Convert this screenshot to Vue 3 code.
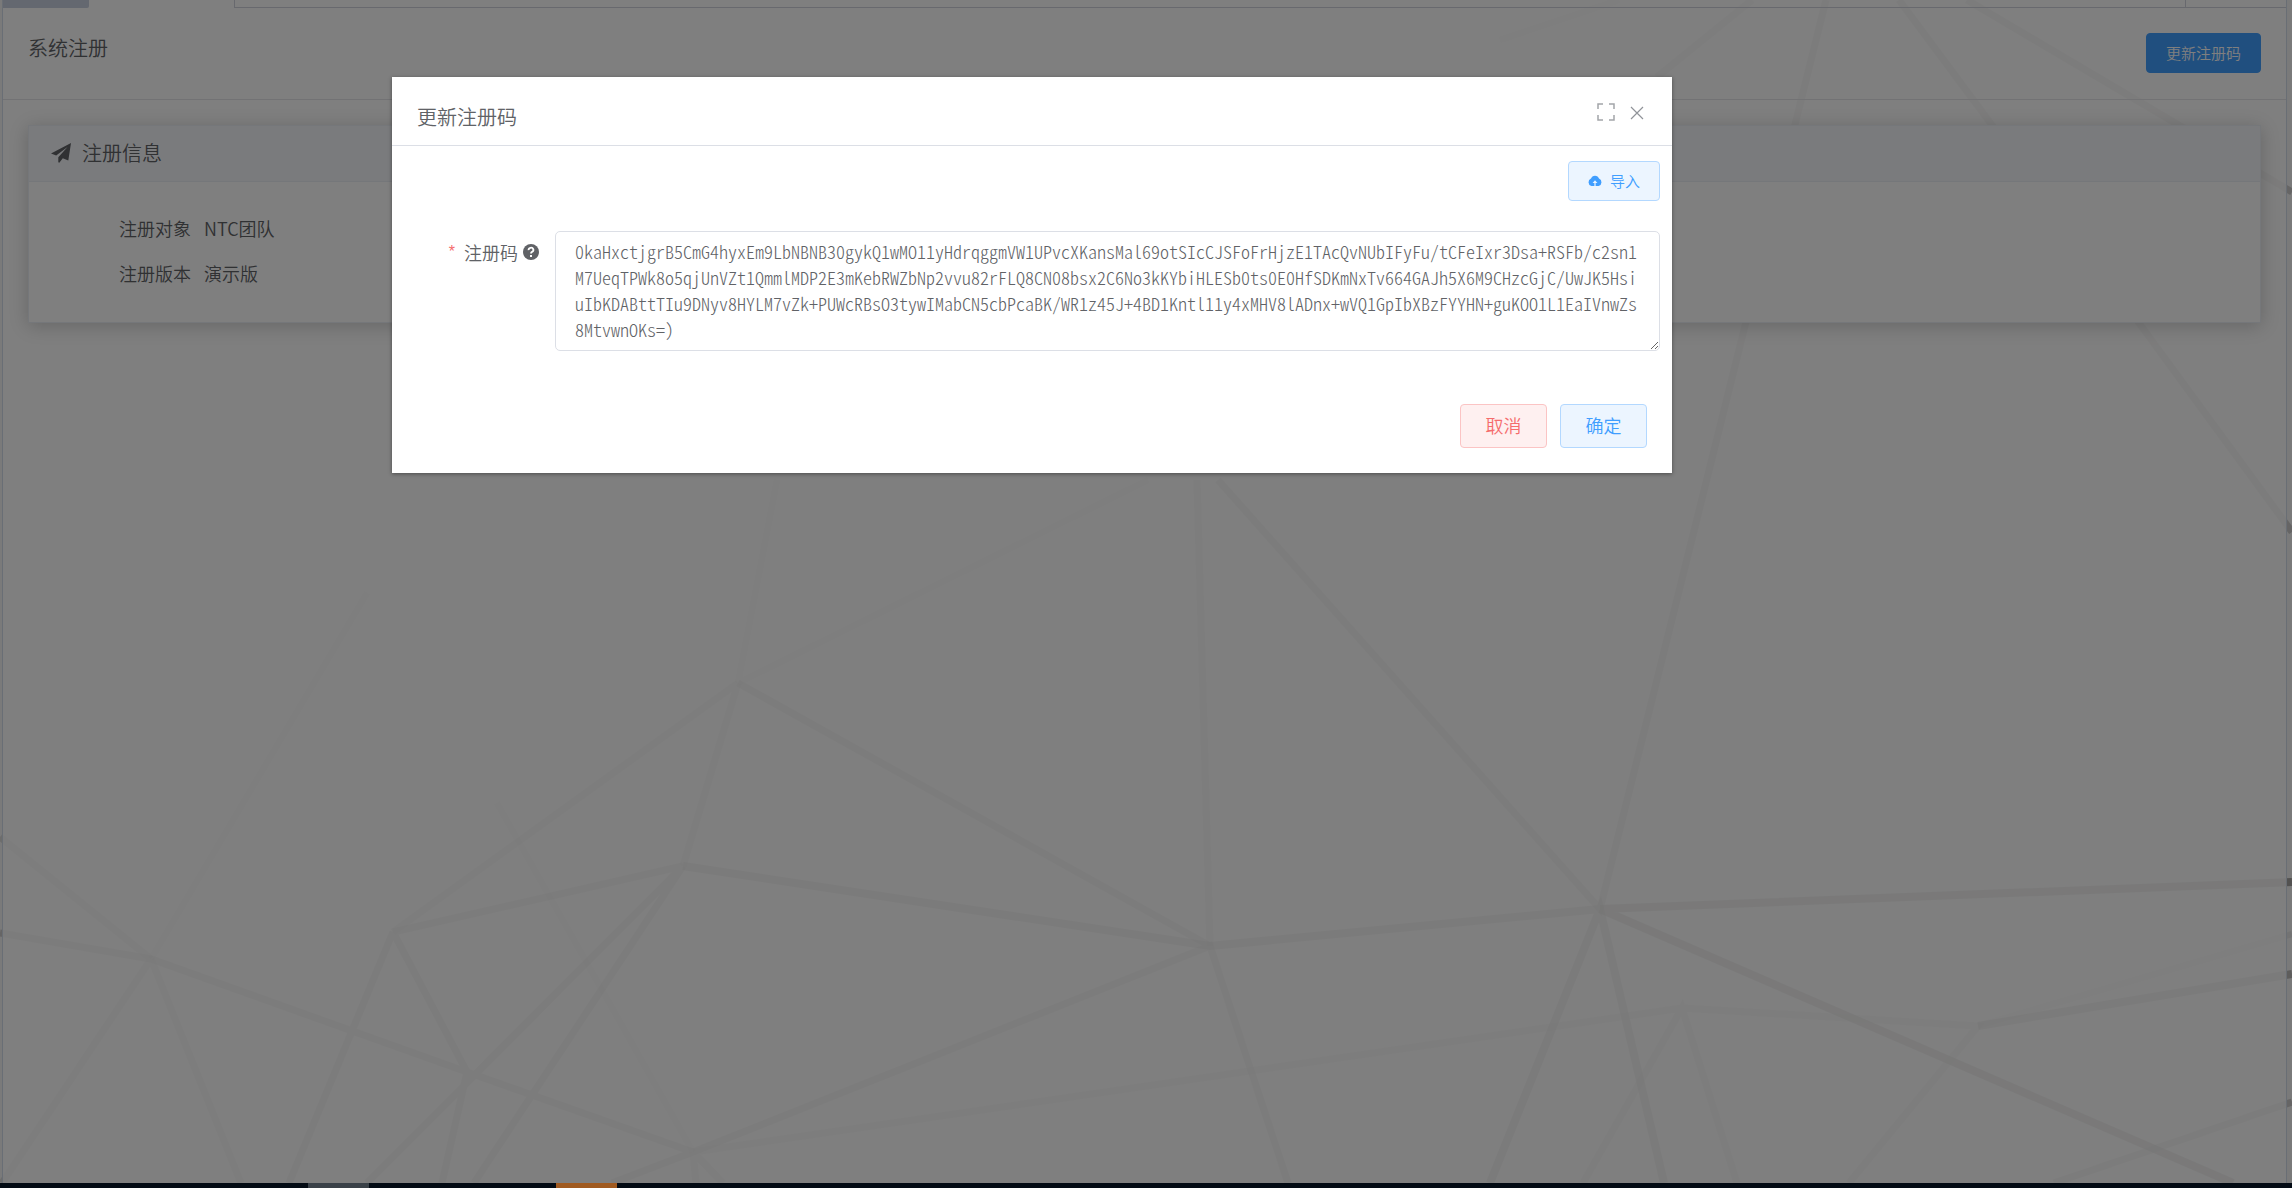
<script setup>
import { ref } from 'vue'

const code = ref(
  '0kaHxctjgrB5CmG4hyxEm9LbNBNB30gykQ1wMO11yHdrqggmVW1UPvcXKansMal69otSIcCJSFoFrHjzE1TAcQvNUbIFyFu/tCFeIxr3Dsa+RSFb/c2sn1' +
  'M7UeqTPWk8o5qjUnVZt1QmmlMDP2E3mKebRWZbNp2vvu82rFLQ8CN08bsx2C6No3kKYbiHLESb0ts0E0HfSDKmNxTv664GAJh5X6M9CHzcGjC/UwJK5Hsi' +
  'uIbKDABttTIu9DNyv8HYLM7vZk+PUWcRBsO3tywIMabCN5cbPcaBK/WR1z45J+4BD1Kntl11y4xMHV8lADnx+wVQ1GpIbXBzFYYHN+guKOO1L1EaIVnwZs' +
  '8MtvwnOKs=)'
)

const info = [
  { label: '注册对象', value: 'NTC团队' },
  { label: '注册版本', value: '演示版' }
]

// Polygon-mesh wallpaper, grouped by how strongly each set of edges shows
const mesh = [
  { opacity: 0.08, width: 6, d: 'M738 683L777 480M738 683L1148 480M151 959L367 593M693 1152L497 803M1500 40L1619 0M1978 1026L2292 934' },
  { opacity: 0.16, width: 7, d: 'M738 683L393 932M738 683L683 866M151 959L0 837M151 959L2 1183M151 959L241 1183M693 1152L1682 1008L1978 1026L1849 1183M1583 1183L1682 1008L1737 1183M693 1152L696 1183M693 1152L723 1183M1197 480L1210 946M1657 77L1752 0' },
  { opacity: 0.26, width: 7, d: 'M738 683L1210 946M683 866L393 932M683 866L367 1183M683 866L474 1183M393 932L289 1183M393 932L467 1072L442 1183M0 933L151 959L467 1072L693 1152M612 1183L693 1152L1210 946L1288 1183M1218 480L1600 909L1826 0M1967 0L2292 192M1899 0L2139 323L2292 532M2054 1183L2292 1102' },
  { opacity: 0.36, width: 8, d: 'M683 866L1210 946L1600 909M1490 1183L1600 909L1664 1183M1978 1026L2292 974' },
  { opacity: 0.5, width: 8, d: 'M1600 909L2292 882M1600 909L2233 1183' }
]
</script>

<template>
  <div class="app">
    <div class="desktop">
      <svg class="mesh" viewBox="0 0 2292 1183" preserveAspectRatio="none" aria-hidden="true">
        <g v-for="g in mesh" :key="g.d" fill="none" stroke="#595450" :stroke-opacity="g.opacity" :stroke-width="g.width">
          <path :d="g.d" />
        </g>
      </svg>
      <div class="window">
        <div class="tabs">
          <span class="tab tab-first"></span>
          <span class="tab tab-active"></span>
          <span class="tab tab-rest"></span>
          <span class="tab tab-end"></span>
        </div>
        <header class="page-head">
          <h1>系统注册</h1>
          <button type="button" class="btn btn-primary">更新注册码</button>
        </header>
        <main class="body">
          <section class="card">
            <h2 class="card-head">
              <svg width="20" height="20" viewBox="0 0 20 20" aria-hidden="true">
                <path fill="#606266" d="M20 0L17.300 17.500L11.800 15.200L8.300 19.800L7.300 19.300V14.200L16.500 4L5.200 12.600L0 10.600Z" />
              </svg>
              注册信息
            </h2>
            <dl class="info">
              <div v-for="row in info" :key="row.label" class="info-row">
                <dt>{{ row.label }}</dt>
                <dd>{{ row.value }}</dd>
              </div>
            </dl>
          </section>
        </main>
      </div>
    </div>

    <div class="overlay">
      <div class="dialog" role="dialog" aria-labelledby="dialog-title">
        <div class="dialog-head">
          <h2 id="dialog-title">更新注册码</h2>
          <div class="dialog-tools">
            <button type="button" class="icon-btn" aria-label="全屏">
              <svg width="18" height="18" viewBox="0 0 18 18" fill="none" stroke="#a3a5a9" stroke-width="1.500">
                <path d="M1 6V1H6M12 1H17V6M17 12V17H12M6 17H1V12" />
              </svg>
            </button>
            <button type="button" class="icon-btn" aria-label="关闭">
              <svg width="18" height="18" viewBox="0 0 18 18" fill="none" stroke="#909399" stroke-width="1.200">
                <path d="M3 4L15 16M15 4L3 16" />
              </svg>
            </button>
          </div>
        </div>
        <div class="dialog-body">
          <div class="toolbar">
            <button type="button" class="btn btn-plain">
              <svg width="14" height="12" viewBox="0 0 14 12" aria-hidden="true">
                <path fill="#409eff" fill-rule="evenodd" d="M3 3.600A4.200 4.200 0 0 1 11 3.600A3.900 3.900 0 0 1 10.600 11H7.600V8H9.400L7 5.300L4.600 8H6.400V11H3.400A3.900 3.900 0 0 1 3 3.600Z" />
              </svg>
              导入
            </button>
          </div>
          <div class="field">
            <label for="code">
              <span class="star">*</span>注册码
              <svg width="16" height="16" viewBox="0 0 16 16" aria-hidden="true">
                <circle cx="8" cy="8" r="8" fill="#606266" />
                <path d="M5.600 6.200A2.400 2.200 0 1 1 9 7.900Q8 8.400 8 9.600" fill="none" stroke="#fff" stroke-width="1.800" />
                <rect x="7" y="11" width="2" height="2" fill="#fff" />
              </svg>
            </label>
            <textarea id="code" v-model="code" rows="4" spellcheck="false"></textarea>
          </div>
        </div>
        <div class="dialog-foot">
          <button type="button" class="btn btn-lg btn-danger">取消</button>
          <button type="button" class="btn btn-lg btn-plain">确定</button>
        </div>
      </div>
    </div>

    <div class="taskbar">
      <span class="task"></span>
      <span class="task task-alert"></span>
    </div>
  </div>
</template>

<style>
body {
  margin: 0;
}
</style>

<style scoped>
.app {
  position: relative;
  display: flex;
  flex-direction: column;
  min-height: 100vh;
  color: #606266;
  font-family: "Noto Sans CJK SC", sans-serif;
  font-weight: 350;
}
.app * {
  box-sizing: border-box;
}
h1, h2, dl, dd {
  margin: 0;
  font-weight: inherit;
}
.desktop {
  position: relative;
  flex: 1;
  display: flex;
  padding: 0 5px 0 2px;
  background: #f4f4f4;
}
.mesh {
  position: absolute;
  inset: 0;
  width: 100%;
  height: 100%;
}
.window {
  position: relative;
  flex: 1;
  border: solid #d2dcea;
  border-width: 0 1px;
  background: rgba(255, 255, 255, 0.87);
}
.tabs {
  display: flex;
  height: 8px;
}
.tab-first {
  width: 86px;
  background: #c8d0e0;
  border-bottom-right-radius: 2px;
}
.tab-active {
  width: 145px;
}
.tab-rest {
  flex: 1;
  border: 1px solid #d0d3dc;
  border-top: 0;
}
.tab-end {
  width: 100px;
  border-bottom: 1px solid #d0d3dc;
  background: #fff;
}
.page-head {
  display: flex;
  justify-content: space-between;
  align-items: flex-start;
  height: 92px;
  padding: 25px;
  border-bottom: 1px solid #e4e4e8;
}
.page-head h1 {
  font-size: 20px;
  line-height: 30px;
}
.body {
  padding: 25px;
}
.card {
  border: 1px solid #ebeef5;
  background: #fff;
  box-shadow: 0 3px 18px rgba(0, 0, 0, 0.2);
}
.card-head {
  display: flex;
  align-items: center;
  gap: 11px;
  height: 56px;
  padding: 0 22px 2px;
  border-bottom: 1px solid #ebeef5;
  background: #f5f7fa;
  font-size: 20px;
}
.info {
  padding: 24px 90px 26px;
}
.info-row {
  display: flex;
  gap: 13px;
  font-size: 18px;
  line-height: 45px;
}
.btn {
  display: flex;
  align-items: center;
  justify-content: center;
  gap: 8px;
  height: 40px;
  padding: 0 19px 1px;
  border: 1px solid;
  border-radius: 4px;
  font: inherit;
  font-size: 15px;
}
.btn-primary {
  border-color: #409eff;
  background: #409eff;
  color: #fff;
}
.btn-plain {
  border-color: #b3d8ff;
  background: #ecf5ff;
  color: #409eff;
}
.btn-danger {
  border-color: #fbc4c4;
  background: #fef0f0;
  color: #f56c6c;
}
.btn-lg {
  min-width: 87px;
  height: 44px;
  padding: 0 24px 2px;
  font-size: 18px;
}
.overlay {
  position: absolute;
  inset: 0;
  display: flex;
  justify-content: center;
  align-items: flex-start;
  padding: 77px 228px 0 0;
  background: rgba(0, 0, 0, 0.5);
}
.dialog {
  flex: 0 1 1280px;
  background: #fff;
  box-shadow: 0 1px 4px rgba(0, 0, 0, 0.4);
}
.dialog-head {
  display: flex;
  justify-content: space-between;
  height: 69px;
  padding: 24px 26px 0 25px;
  border-bottom: 1px solid #dcdfe6;
}
.dialog-head h2 {
  font-size: 20px;
  line-height: 32px;
}
.dialog-tools {
  display: flex;
  align-items: flex-start;
  gap: 13px;
}
.icon-btn {
  display: flex;
  padding: 2px 0;
  border: 0;
  background: none;
}
.dialog-body {
  padding: 15px 12px 0 40px;
}
.toolbar {
  display: flex;
  justify-content: flex-end;
  margin-bottom: 30px;
}
.field {
  display: flex;
  align-items: flex-start;
}
.field label {
  display: flex;
  flex: 0 0 123px;
  align-items: center;
  justify-content: flex-end;
  gap: 5px;
  padding-right: 16px;
  font-size: 18px;
  line-height: 42px;
}
.star {
  margin-right: 4px;
  color: #f56c6c;
  font-family: "Liberation Sans", sans-serif;
  font-size: 16px;
  font-weight: 400;
}
textarea {
  flex: 1;
  display: block;
  padding: 6px 19px 8px;
  border: 1px solid #dcdfe6;
  border-radius: 5px;
  background: #fff;
  color: #606266;
  font-family: "Noto Sans CJK SC", monospace;
  font-size: 18px;
  font-weight: 300;
  font-feature-settings: "hwid";
  line-height: 26px;
  word-break: break-all;
  overflow: hidden;
  resize: vertical;
}
.dialog-foot {
  display: flex;
  justify-content: flex-end;
  gap: 13px;
  padding: 53px 25px 25px;
}
.taskbar {
  position: relative;
  display: flex;
  gap: 187px;
  height: 5px;
  padding-left: 308px;
  background: #030b14;
}
.task {
  width: 61px;
  background: #3a4148;
}
.task-alert {
  background: #a05a20;
}
</style>
